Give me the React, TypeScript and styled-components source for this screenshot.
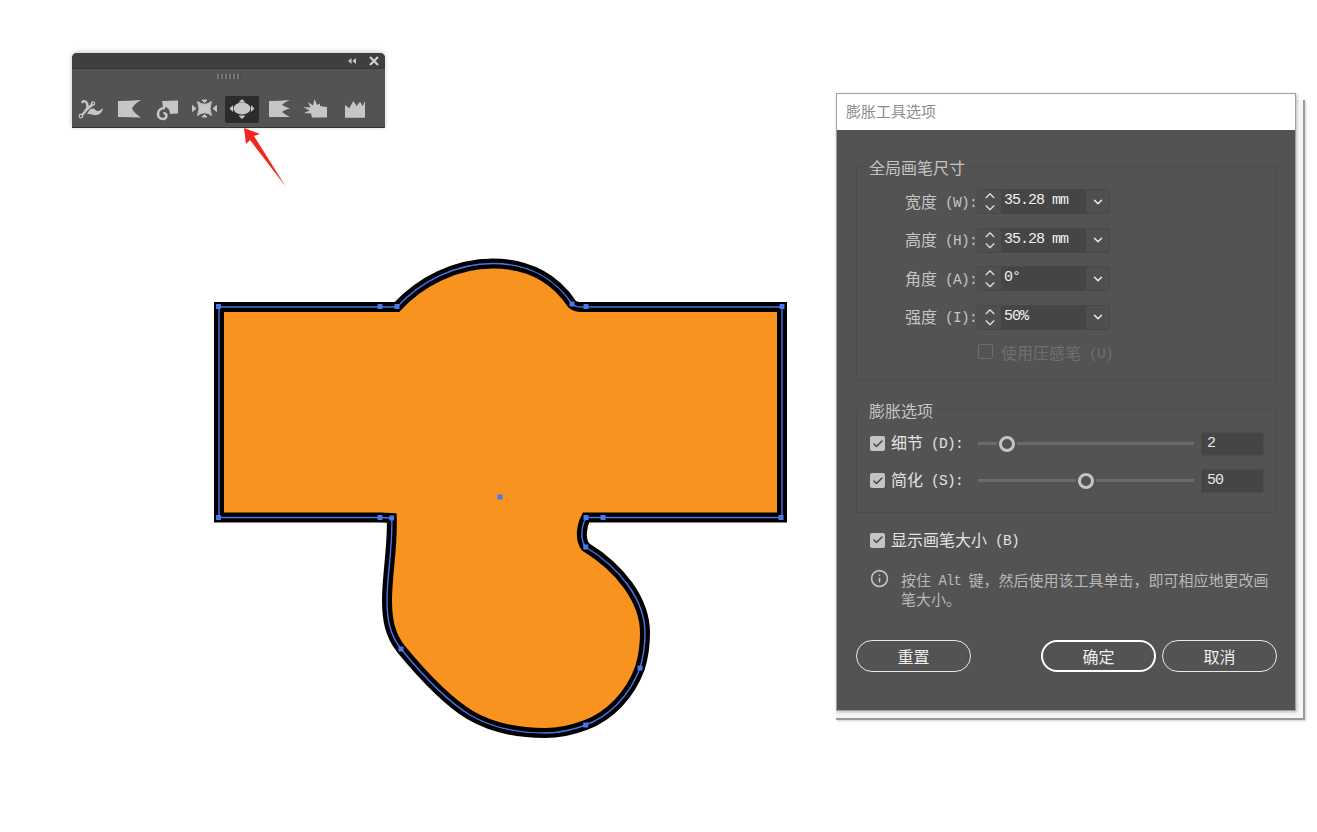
import { FunctionComponent, ReactNode } from "react";
import styled, { createGlobalStyle } from "styled-components";
import { Check, ChevronDown, ChevronUp, Info } from "lucide-react";

const GlobalStyle = createGlobalStyle`
  html, body {
    margin: 0;
    background: #fff;
  }
  * {
    box-sizing: border-box;
  }
`;

const Canvas = styled.div`
  position: relative;
  isolation: isolate;
  width: 1317px;
  height: 832px;
  overflow: hidden;
  background: #fff;
  font-family: "Noto Sans CJK SC", "Liberation Mono", sans-serif;
`;

/* ---- floating tool panel ---- */
const ToolPanel = styled.div`
  position: absolute;
  left: 72px;
  top: 53px;
  width: 313px;
  height: 75px;
  background: #535353;
  border-radius: 5px 5px 0 0;
  border-bottom: 1px solid #333;
  box-shadow: 0 -1px 5px rgba(0, 0, 0, 0.22);
  display: flex;
  flex-direction: column;
`;

const PanelHeader = styled.div`
  height: 16px;
  background: #3f3f3f;
  border-radius: 5px 5px 0 0;
  border-bottom: 1px solid #383838;
  display: flex;
  justify-content: flex-end;
  align-items: center;
  padding-right: 6px;
  gap: 13px;
`;

const Grip = styled.div`
  align-self: center;
  width: 24px;
  height: 5px;
  margin-top: 5px;
  background: repeating-linear-gradient(90deg, #777 0 2px, #4a4a4a 2px 4px);
`;

const ToolRow = styled.div`
  display: flex;
  gap: 3.4px;
  margin: 17px 0 0 3px;
`;

const ToolButton = styled.div<{ $active?: boolean }>`
  width: 34px;
  height: 27px;
  border-radius: 2px;
  background: ${(p) => (p.$active ? "#2c2c2c" : "transparent")};
  svg {
    display: block;
  }
`;

const ICON = "#c6c6c6";

const tools: ReactNode[] = [
  <>
    <path
      d="M7 7C9 3 12.5 6 12.5 10C12.5 14 9 17 6.5 19.5M10 15L18 8"
      fill="none"
      stroke={ICON}
      strokeWidth="2.4"
    />
    <circle cx="6" cy="20" r="1.8" fill="none" stroke={ICON} strokeWidth="1.2" />
    <circle cx="18" cy="7.5" r="1.6" fill="none" stroke={ICON} strokeWidth="1.2" />
    <path d="M12 18C15 12 18 11.5 20.5 14C22.5 16 25 15 28 12C27.5 17 23 20 19 19C16 18.2 14 18 12 18Z" fill={ICON} />
  </>,
  <path d="M6 5Q18 5 29 4Q22 8 20 12.5Q22 17 29 21.5Q18 21 6 21Z" fill={ICON} />,
  <>
    <path d="M12 5L28 4.5V17.5L20 18C20 13 17 10.5 13 11Z" fill={ICON} />
    <path
      d="M15 12C10 12 8 15 8 18C8 21 10 23 13 23C15 23 16.5 21.5 16.5 19.5C16.5 18 15 17 13.5 17.5"
      fill="none"
      stroke={ICON}
      strokeWidth="2.6"
    />
  </>,
  <path
    d="M10.5 5.5Q17.5 11 24.5 5.5Q21.5 12.5 24.5 19.5Q17.5 14 10.5 19.5Q13.5 12.5 10.5 5.5ZM15 4H20L17.5 6.5ZM15 21H20L17.5 18.5ZM5.5 9.5V15.5L9 12.5ZM29.5 9.5V15.5L26 12.5Z"
    fill={ICON}
    stroke={ICON}
    strokeWidth="0.9"
    strokeLinejoin="round"
  />,
  <>
    <ellipse cx="17" cy="12.5" rx="8.5" ry="6" fill={ICON} />
    <path d="M17 3L13.5 6.5H20.5ZM17 23L13.5 19.5H20.5ZM4.5 12.5L8 9V16ZM29.5 12.5L26 9V16Z" fill={ICON} />
  </>,
  <path d="M7 5Q18 5 28 4Q22 6.5 20 9Q24 11 28 12.5Q22 14 20 16Q24 19 28 21Q18 21 7 21Z" fill={ICON} />,
  <path
    d="M28 21.5H13L12 17.5L5 17L10.5 14.5L4 11L11.5 11.5L9 6L14 9.5L15.5 3L18 9L21 7.5V10L28 11Z"
    fill={ICON}
  />,
  <path d="M8 21.7V9L12.3 12.3L16.3 5L19.7 10L23 5.7L25.7 10L28 5V21.7Z" fill={ICON} />,
];

/* ---- the drawing ---- */
const Arrow = styled.svg`
  position: absolute;
  left: 240px;
  top: 124px;
`;

const Drawing = styled.svg`
  position: absolute;
  left: 200px;
  top: 250px;
`;

const OUTLINE =
  "M219 307L397 307C420 282 455 263.5 493 263.5C530 263.5 556 280 572 304C575 307 578 307 586 307L782 307L782 517.5L586 517.5C581 527 580 540 585.7 547C620 568 645 600 645 633C645 645 643 658 640 668C630 695 610 716 585.7 725C570 731 558 733 545 733C520 733 492 728 470 715C445 700 420 672 401 649C390 635 387 620 387 600C387 575 393 545 391.7 518L380 517.5L219 517.5Z";

const HANDLES = [
  [218.5, 306.5],
  [380, 306.5],
  [397, 306.5],
  [572, 304],
  [586, 306.5],
  [782, 306.5],
  [781, 517.5],
  [603, 517.5],
  [586, 517.5],
  [585.7, 547],
  [640, 668],
  [585.7, 725],
  [401, 649],
  [391.7, 518],
  [380, 517.5],
  [218.5, 517.5],
  [500, 497],
];

/* ---- options dialog ---- */
const Dialog = styled.div`
  position: absolute;
  left: 836px;
  top: 93px;
  width: 460px;
  height: 618px;
  border: 1px solid #a0a0a0;
  background: #535353;
  display: flex;
  flex-direction: column;
  box-shadow: 1px 1px 3px #bbb;

  &::before {
    content: "";
    position: absolute;
    z-index: -1;
    left: -1px;
    top: 6px;
    right: -10px;
    bottom: -10px;
    background: #f6f6f6;
    border-right: 2px solid #9a9a9a;
    border-bottom: 2px solid #9a9a9a;
    box-shadow: 1px 1px 2px #d0d0d0;
  }
`;

const TitleBar = styled.div`
  height: 36px;
  background: #fff;
  color: #8c8c8c;
  font-size: 15px;
  line-height: 33px;
  padding-left: 9px;
`;

const Body = styled.div`
  flex: 1;
  padding: 36px 18px 0 19px;
  display: flex;
  flex-direction: column;
`;

const Group = styled.div<{ $height: number; $gap?: number }>`
  position: relative;
  height: ${(p) => p.$height}px;
  margin-top: ${(p) => p.$gap ?? 0}px;
  border: 1px solid #4b4b4b;
  border-radius: 3px;
  display: flex;
  flex-direction: column;
`;

const GroupTitle = styled.div`
  position: absolute;
  left: 9px;
  top: -10px;
  padding: 0 3px;
  background: #535353;
  color: #c4c4c4;
  font-size: 16px;
  line-height: 20px;
`;

const Lat = styled.span`
  font-family: "Liberation Mono", monospace;
  font-size: 14.5px;
  letter-spacing: -0.7px;
  line-height: 1;
  white-space: pre;
  vertical-align: 1px;
`;

const FieldList = styled.div`
  display: flex;
  flex-direction: column;
  gap: 13.6px;
  padding: 22px 0 0 48px;
`;

const FieldRow = styled.div`
  display: flex;
  align-items: center;
  height: 25px;
`;

const FieldLabel = styled.div`
  width: 72px;
  padding-bottom: 2px;
  color: #c4c4c4;
  font-size: 16px;
  white-space: nowrap;
`;

const Spinner = styled.div`
  width: 133px;
  height: 25px;
  display: flex;
  border: 1px solid #484848;
  border-radius: 3px;
  background: #4f4f4f;
`;

const Stepper = styled.div`
  width: 23px;
  display: flex;
  flex-direction: column;
  align-items: center;
  justify-content: center;
  color: #e0e0e0;
  svg {
    display: block;
    margin: -2px 0;
  }
`;

const ValueBox = styled.div`
  flex: 1;
  background: #454545;
  color: #f0f0f0;
  padding-left: 3px;
  line-height: 21px;
  font-family: "Liberation Mono", monospace;
  font-size: 15px;
  letter-spacing: -1px;
  white-space: pre;
`;

const DropButton = styled.div`
  width: 23px;
  display: flex;
  align-items: center;
  justify-content: center;
  color: #eee;
`;

const PressureRow = styled.div`
  display: flex;
  align-items: center;
  gap: 8px;
  margin: 13px 0 0 121px;
  color: #6f6f6f;
  font-size: 16px;
  height: 18px;
`;

const EmptyBox = styled.div`
  width: 15px;
  height: 15px;
  border: 1.5px solid #6c6c6c;
  border-radius: 2px;
`;

const CheckBox = styled.div`
  width: 15px;
  height: 15px;
  flex: none;
  background: #c4c4c4;
  border-radius: 2px;
  color: #444;
  display: flex;
  align-items: center;
  justify-content: center;
`;

const SliderList = styled.div`
  display: flex;
  flex-direction: column;
  gap: 14px;
  padding: 22px 0 0 13px;
`;

const SliderRow = styled.div`
  display: flex;
  align-items: center;
  height: 23px;
`;

const SliderLabel = styled.div`
  width: 87px;
  margin-left: 6px;
  padding-bottom: 4px;
  color: #e2e2e2;
  font-size: 16px;
  white-space: nowrap;
`;

const Track = styled.div`
  position: relative;
  width: 216px;
  height: 3px;
  margin-right: 7px;
  background: #6b6b6b;
`;

const Thumb = styled.div<{ $at: number }>`
  position: absolute;
  left: ${(p) => p.$at - 8}px;
  top: -6.5px;
  width: 16px;
  height: 16px;
  border-radius: 50%;
  background: #535353;
  border: 3px solid #c4c4c4;
  box-shadow: 0 0 0 2px #535353;
`;

const NumberBox = styled.div`
  width: 63px;
  height: 24px;
  background: #454545;
  border: 1px solid #4c4c4c;
  border-radius: 2px;
  color: #e8e8e8;
  padding-left: 5px;
  line-height: 21px;
  font-family: "Liberation Mono", monospace;
  font-size: 15px;
  letter-spacing: -1px;
`;

const BrushRow = styled.div`
  display: flex;
  align-items: center;
  height: 18px;
  margin: 18px 0 0 14px;
`;

const BrushLabel = styled.div`
  margin-left: 6px;
  padding-bottom: 3px;
  color: #e2e2e2;
  font-size: 16px;
`;

const Hint = styled.div`
  display: flex;
  align-items: flex-start;
  gap: 12px;
  margin: 20px 0 0 14px;
  color: #c4c4c4;
  svg {
    flex: none;
  }
`;

const HintText = styled.div`
  width: 372px;
  margin-top: 1px;
  color: #b8b8b8;
  font-size: 15px;
  line-height: 19px;
  ${Lat} {
    font-size: 14px;
    letter-spacing: -0.9px;
  }
`;

const Buttons = styled.div`
  display: flex;
  gap: 6px;
  margin-top: 32px;
`;

const PillButton = styled.div<{ $primary?: boolean }>`
  width: 115px;
  height: 32px;
  border-radius: 16px;
  border: ${(p) => (p.$primary ? "2.5px solid #fff" : "1.5px solid #e8e8e8")};
  color: #eee;
  font-size: 16px;
  display: flex;
  align-items: center;
  justify-content: center;
  &:first-child {
    margin-right: 64px;
  }
`;

const Tick = () => (
  <CheckBox>
    <Check size={12} strokeWidth={3} />
  </CheckBox>
);

const Field: FunctionComponent<{ name: string; letter: string; value: string }> = ({ name, letter, value }) => (
  <FieldRow>
    <FieldLabel>
      {name}
      <Lat> ({letter}):</Lat>
    </FieldLabel>
    <Spinner>
      <Stepper>
        <ChevronUp size={16} strokeWidth={2} />
        <ChevronDown size={16} strokeWidth={2} />
      </Stepper>
      <ValueBox>{value}</ValueBox>
      <DropButton>
        <ChevronDown size={14} strokeWidth={2.5} />
      </DropButton>
    </Spinner>
  </FieldRow>
);

const Slider: FunctionComponent<{ name: string; letter: string; at: number; value: string }> = ({
  name,
  letter,
  at,
  value,
}) => (
  <SliderRow>
    <Tick />
    <SliderLabel>
      {name}
      <Lat> ({letter}):</Lat>
    </SliderLabel>
    <Track>
      <Thumb $at={at} />
    </Track>
    <NumberBox>{value}</NumberBox>
  </SliderRow>
);

export default function App() {
  return (
    <Canvas>
      <GlobalStyle />

      <ToolPanel>
        <PanelHeader>
          <svg width="8" height="6" viewBox="0 0 8 6">
            <path d="M3.5 0V6L0 3ZM8 0V6L4.5 3Z" fill="#c8c8c8" />
          </svg>
          <svg width="10" height="10" viewBox="0 0 10 10">
            <path d="M1 1L9 9M9 1L1 9" stroke="#cfcfcf" strokeWidth="2.2" />
          </svg>
        </PanelHeader>
        <Grip />
        <ToolRow>
          {tools.map((icon, i) => (
            <ToolButton key={i} $active={i === 4}>
              <svg width="34" height="27" viewBox="0 0 34 27">
                {icon}
              </svg>
            </ToolButton>
          ))}
        </ToolRow>
      </ToolPanel>

      <Arrow width="50" height="66" viewBox="240 124 50 66">
        <path d="M244 128L260 134L254 136L286 187L250 140L246 144Z" fill="#f5241c" />
      </Arrow>

      <Drawing width="600" height="500" viewBox="200 250 600 500">
        <path d={OUTLINE} fill="#f9931f" stroke="#000" strokeWidth="10" strokeLinejoin="miter" />
        <path d={OUTLINE} fill="none" stroke="#4a74e8" strokeWidth="1.4" />
        {HANDLES.map(([x, y]) => (
          <rect key={`${x}-${y}`} x={x - 2.5} y={y - 2.5} width="5" height="5" fill="#4a78ee" />
        ))}
      </Drawing>

      <Dialog>
        <TitleBar>膨胀工具选项</TitleBar>
        <Body>
          <Group $height={215}>
            <GroupTitle>全局画笔尺寸</GroupTitle>
            <FieldList>
              <Field name="宽度" letter="W" value="35.28 mm" />
              <Field name="高度" letter="H" value="35.28 mm" />
              <Field name="角度" letter="A" value="0°" />
              <Field name="强度" letter="I" value="50%" />
            </FieldList>
            <PressureRow>
              <EmptyBox />
              <span>
                使用压感笔<Lat> (U)</Lat>
              </span>
            </PressureRow>
          </Group>

          <Group $height={104} $gap={28}>
            <GroupTitle>膨胀选项</GroupTitle>
            <SliderList>
              <Slider name="细节" letter="D" at={29} value="2" />
              <Slider name="简化" letter="S" at={108} value="50" />
            </SliderList>
          </Group>

          <BrushRow>
            <Tick />
            <BrushLabel>
              显示画笔大小<Lat> (B)</Lat>
            </BrushLabel>
          </BrushRow>

          <Hint>
            <Info size={19} strokeWidth={2} />
            <HintText>
              按住<Lat> Alt </Lat>键，然后使用该工具单击，即可相应地更改画
              <br />
              笔大小。
            </HintText>
          </Hint>

          <Buttons>
            <PillButton>重置</PillButton>
            <PillButton $primary>确定</PillButton>
            <PillButton>取消</PillButton>
          </Buttons>
        </Body>
      </Dialog>
    </Canvas>
  );
}
